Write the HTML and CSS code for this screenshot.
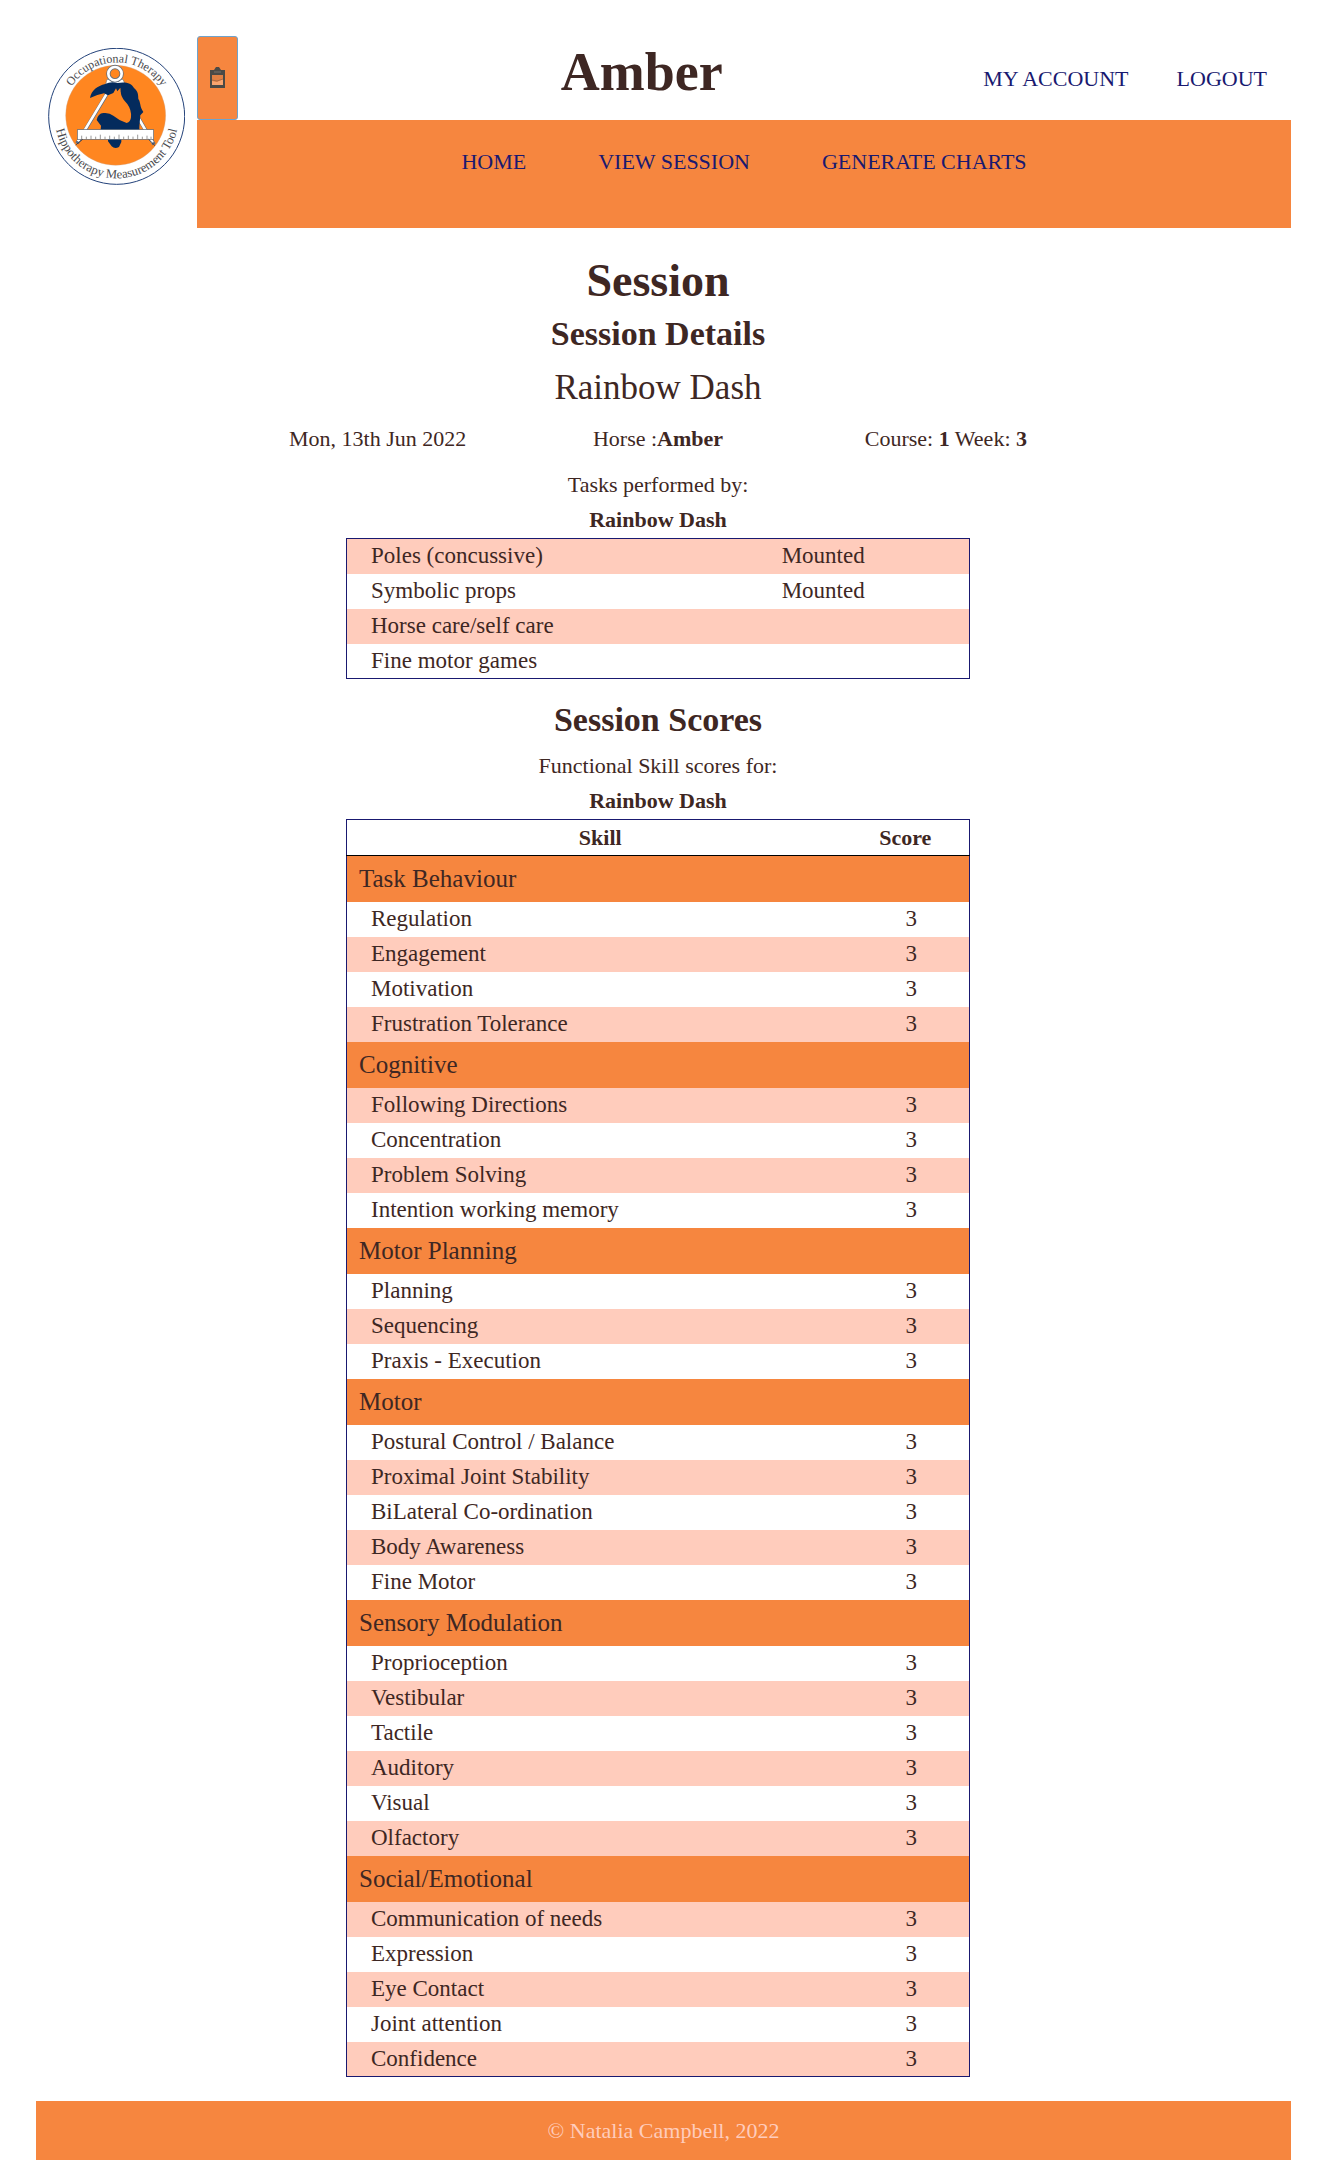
FILE: index.html
```html
<!DOCTYPE html>
<html lang="en">
<head>
<meta charset="utf-8">
<title>Amber - Session</title>
<link rel="stylesheet" href="styles.css">
</head>
<body>
<header class="site-header">
  <a class="brand" href="#" aria-label="Home">
    <svg class="logo" viewBox="54 54 411 411">
      <defs>
        <path id="arc-top" d="M98 259A162 162 0 0 1 422 259"/>
        <path id="arc-bottom" d="M74 259A186 186 0 0 0 446 259"/>
      </defs>
      <circle cx="260" cy="259" r="204" fill="#fff" stroke="#23427a" stroke-width="3"/>
      <circle cx="257" cy="256" r="150" fill="#ff8620" stroke="#c9a58c" stroke-width="1"/>
      <g fill="none" stroke="#5f6d80" stroke-width="11"><path d="M238 180L141 340M276 180L372 343"/></g>
      <g fill="none" stroke="#fff" stroke-width="8"><path d="M236 182L144 334M278 182L368 338"/></g>
      <path d="M231 148L227 162H285L279 148Z" fill="#fff" stroke="#777" stroke-width="2"/>
      <circle cx="255" cy="131" r="20" fill="none" stroke="#66707c" stroke-width="13"/>
      <circle cx="255" cy="131" r="20" fill="none" stroke="#fff" stroke-width="8"/>
      <path d="M234 196L252 188L258 176L268 190L296 225L303 262L290 279L262 266L244 240L236 246L226 236Z" fill="#ff8620"/>
      <path d="M180 204C184 181 202 168 226 162Q242 154 262 159C285 155 304 158 312 174C324 184 325 194 325 207C333 218 328 228 340 246L331 256L328 291V300H274V336L267 351Q254 358 245 349L234 334V300H212L213 287L200 270Q204 250 220 249Q238 247 250 257Q268 272 290 279Q302 276 303 262Q305 240 292 222Q275 204 273 192L271 173L262 184L258 175L250 189L234 196L222 190Q203 194 180 204Z" fill="#042b5d"/>
      <rect x="142" y="299" width="229" height="29" fill="#fff" stroke="#56606e" stroke-width="2"/>
      <path d="M155 327V317M169 327V320M183 327V317M197 327V320M211 327V314M225 327V320M239 327V317M253 327V320M267 327V314M281 327V320M295 327V317M309 327V320M323 327V314M337 327V320M351 327V317M363 327V320" stroke="#666" stroke-width="2"/>
      <path d="M158 328L137 345M356 328L375 347" stroke="#3c3f4c" stroke-width="3"/>
      <g class="logo-text">
        <text><textPath href="#arc-top" startOffset="50%">Occupational Therapy</textPath></text>
        <text class="logo-text-lower"><textPath href="#arc-bottom" startOffset="50%">Hippotherapy Measurement Tool</textPath></text>
      </g>
    </svg>
  </a>
  <div class="header-main">
    <div class="header-top">
      <button class="clipboard" type="button" aria-label="Notes">
        <svg width="17" height="22" viewBox="0 0 17 22"><path d="M1 3H5L7 0H10L12 3H16V21H1Z" fill="#4b4a46"/><path d="M3 8H14V18H3Z" fill="#e08043"/><path d="M5 5H12" stroke="#77706a"/><path d="M3 14L8 15L14 12V18H3Z" fill="#f9a56f"/><path d="M3 13L8 14L14 12" fill="none" stroke="#ad6b43"/></svg>
      </button>
      <h1 class="horse-title">Amber</h1>
      <nav class="account" aria-label="Account"><a href="#">MY ACCOUNT</a><a href="#">LOGOUT</a></nav>
    </div>
    <nav class="main-nav" aria-label="Main"><a href="#">HOME</a><a href="#">VIEW SESSION</a><a href="#">GENERATE CHARTS</a></nav>
  </div>
</header>
<main class="content">
  <h2 class="page-title">Session</h2>
  <h3 class="section-title">Session Details</h3>
  <p class="client">Rainbow Dash</p>
  <div class="details"><span>Mon, 13th Jun 2022</span><span>Horse :<b>Amber</b></span><span>Course: <b>1</b> Week: <b>3</b></span></div>
  <table class="data tasks">
    <caption>Tasks performed by:<br><b>Rainbow Dash</b></caption>
    <tbody>
      <tr class="tint"><td>Poles (concussive)</td><td>Mounted</td></tr>
      <tr><td>Symbolic props</td><td>Mounted</td></tr>
      <tr class="tint"><td>Horse care/self care</td><td></td></tr>
      <tr><td>Fine motor games</td><td></td></tr>
    </tbody>
  </table>
  <h3 class="section-title">Session Scores</h3>
  <table class="data scores">
    <caption>Functional Skill scores for:<br><b>Rainbow Dash</b></caption>
    <thead><tr><th scope="col">Skill</th><th scope="col">Score</th></tr></thead>
    <tbody>
      <tr class="group"><td colspan="2">Task Behaviour</td></tr>
      <tr><td>Regulation</td><td>3</td></tr>
      <tr class="tint"><td>Engagement</td><td>3</td></tr>
      <tr><td>Motivation</td><td>3</td></tr>
      <tr class="tint"><td>Frustration Tolerance</td><td>3</td></tr>
      <tr class="group"><td colspan="2">Cognitive</td></tr>
      <tr class="tint"><td>Following Directions</td><td>3</td></tr>
      <tr><td>Concentration</td><td>3</td></tr>
      <tr class="tint"><td>Problem Solving</td><td>3</td></tr>
      <tr><td>Intention working memory</td><td>3</td></tr>
      <tr class="group"><td colspan="2">Motor Planning</td></tr>
      <tr><td>Planning</td><td>3</td></tr>
      <tr class="tint"><td>Sequencing</td><td>3</td></tr>
      <tr><td>Praxis - Execution</td><td>3</td></tr>
      <tr class="group"><td colspan="2">Motor</td></tr>
      <tr><td>Postural Control / Balance</td><td>3</td></tr>
      <tr class="tint"><td>Proximal Joint Stability</td><td>3</td></tr>
      <tr><td>BiLateral Co-ordination</td><td>3</td></tr>
      <tr class="tint"><td>Body Awareness</td><td>3</td></tr>
      <tr><td>Fine Motor</td><td>3</td></tr>
      <tr class="group"><td colspan="2">Sensory Modulation</td></tr>
      <tr><td>Proprioception</td><td>3</td></tr>
      <tr class="tint"><td>Vestibular</td><td>3</td></tr>
      <tr><td>Tactile</td><td>3</td></tr>
      <tr class="tint"><td>Auditory</td><td>3</td></tr>
      <tr><td>Visual</td><td>3</td></tr>
      <tr class="tint"><td>Olfactory</td><td>3</td></tr>
      <tr class="group"><td colspan="2">Social/Emotional</td></tr>
      <tr class="tint"><td>Communication of needs</td><td>3</td></tr>
      <tr><td>Expression</td><td>3</td></tr>
      <tr class="tint"><td>Eye Contact</td><td>3</td></tr>
      <tr><td>Joint attention</td><td>3</td></tr>
      <tr class="tint"><td>Confidence</td><td>3</td></tr>
    </tbody>
  </table>
</main>
<footer class="site-footer">© Natalia Campbell, 2022</footer>
</body>
</html>
```
FILE: styles.css
```css
* { box-sizing: border-box; }

body {
  margin: 0;
  padding-top: 36px;
  background: #fff;
  color: #3e2723;
  font: 22px/34px "Liberation Serif", serif;
}

h1, h2, h3, p { margin: 0; }
a { color: #191970; text-decoration: none; }

.site-header { display: flex; margin: 0 36px; }
.brand { width: 161px; padding: 12px; }
.logo { display: block; width: 137px; height: 137px; }
.logo-text { font-size: 36px; fill: #4a4a4e; text-anchor: middle; }
.logo-text-lower { font-size: 38px; }

.header-main { flex: 1; }
.header-top { display: flex; justify-content: space-between; height: 84px; }
.clipboard {
  display: flex;
  align-items: center;
  justify-content: center;
  width: 41px;
  padding: 0;
  background: #f6863f;
  border: 1px solid #6fa3cc;
  border-radius: 3px;
}
.horse-title { padding-left: 62px; font-size: 54px; line-height: 72px; }
.account { display: flex; gap: 48px; padding: 26px 24px 0 0; }
.main-nav {
  display: flex;
  justify-content: center;
  gap: 72px;
  height: 108px;
  padding-top: 25px;
  background: #f6863f;
}

.content { margin: 0 45px 0 34px; padding: 24px 0; text-align: center; }
.page-title { font-size: 46px; line-height: 58px; }
.section-title { font-size: 34px; line-height: 48px; }
.client { padding-top: 6px; font-size: 35px; line-height: 48px; }
.details {
  display: grid;
  grid-template-columns: 1fr auto 1fr;
  max-width: 738px;
  margin: 10px auto 11px;
}
.details span:first-child { text-align: left; }
.details span:last-child { text-align: right; }

.data { width: 50%; margin: 0 auto; border-collapse: collapse; table-layout: fixed; font-size: 23px; text-align: left; }
.data caption { padding-bottom: 1px; font-size: 22px; line-height: 35px; }
.data tbody, .data thead { border: 1px solid #191970; }
.data td { height: 35px; padding: 0 0 0 24px; line-height: 34px; }
.tint { background: #ffccbc; }
.tasks td:first-child { width: 66%; }
.tasks { margin-bottom: 17px; }

.scores { margin-top: 4px; }
.scores th { height: 36px; padding: 0; font-size: 22px; text-align: center; }
.scores thead { border-bottom-color: #000; }
.scores th:last-child { width: 116px; padding-right: 12px; }
.scores td:last-child { padding: 0; text-align: center; }
.scores .group td { height: 46px; padding-left: 12px; background: #f6863f; font-size: 25px; text-align: left; }

.site-footer {
  margin: 0 36px;
  padding: 12px 0;
  background: #f6863f;
  color: #ffccbc;
  line-height: 35px;
  text-align: center;
}
```
